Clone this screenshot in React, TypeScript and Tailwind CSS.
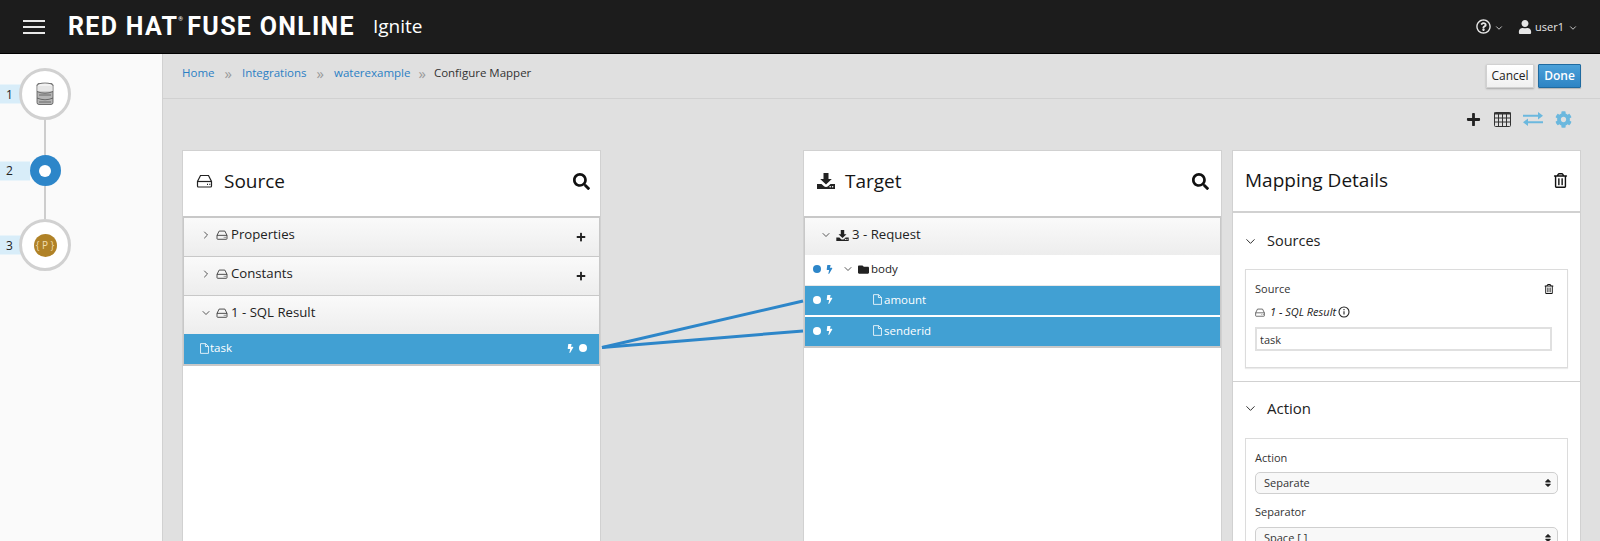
import React from "react";
import { ChevronDown, ChevronRight } from "lucide-react";
import { FaPlus, FaSearch, FaBolt, FaFolder, FaRegTrashAlt, FaUser, FaCog, FaSort, FaRegQuestionCircle } from "react-icons/fa";

function Hdd({ className = "", color = "#222" }: { className?: string; color?: string }) {
  return (
    <svg viewBox="0 0 16 14" className={className} fill="none" stroke={color} strokeWidth="1.2">
      <path d="M4 1.500h8l3 6v4.500a1 1 0 0 1-1 1H2a1 1 0 0 1-1-1V7.500z" />
      <path d="M1 7.500h14" />
      <path d="M10.500 10.300h1M12.800 10.300h1" />
    </svg>
  );
}

function Download({ className = "" }: { className?: string }) {
  return (
    <svg viewBox="0 0 18 16" className={className} fill="#222">
      <path d="M6.500 0h5v6h3.300L9 11.500 3.200 6h3.300z" />
      <path d="M0 11h4.500L7 13.300c1 .9 3 .9 4 0L13.500 11H18v5H0z" />
      <circle cx="13.200" cy="13.700" r=".8" fill="#fff" />
      <circle cx="15.600" cy="13.700" r=".8" fill="#fff" />
    </svg>
  );
}

function FileIcon({ className = "" }: { className?: string }) {
  return (
    <svg viewBox="0 0 10 12" className={className} fill="none" stroke="#fff" strokeWidth=".9">
      <path d="M.6.600h5.600l3.200 3v7.800H.6z" />
      <path d="M6 .600v3.200h3.400" />
    </svg>
  );
}

function InfoCircle() {
  return (
    <svg viewBox="0 0 12 12" className="ml-[2px] h-[12px] w-[12px]" fill="none" stroke="#222" strokeWidth="1.100">
      <circle cx="6" cy="6" r="5" />
      <path d="M6 5.300v3.200M6 3v1.200" />
    </svg>
  );
}

function Db() {
  return (
    <svg viewBox="0 0 18 24" className="h-[24px] w-[18px]">
      <rect x="1" y="1.500" width="16" height="21" rx="2" fill="#b5b5b5" stroke="#555" strokeWidth=".8" />
      <ellipse cx="9" cy="3.500" rx="7.800" ry="2.500" fill="#f2f2f2" stroke="#666" strokeWidth=".8" />
      <rect x="1.400" y="4" width="15.200" height="5.500" fill="#e6e6e6" />
      <path d="M1 9.500q8 3.500 16 0M1 16q8 3.500 16 0M3 13h12M3 20h12" fill="none" stroke="#555" strokeWidth=".8" />
    </svg>
  );
}

function TableIcon() {
  return (
    <svg viewBox="0 0 17 15" className="h-[15px] w-[17px]" fill="none" stroke="#333" strokeWidth="1">
      <rect x=".5" y=".5" width="16" height="14" rx="1" />
      <path d="M0 1.500h17" strokeWidth="2" />
      <path d="M.5 6h16M.5 10h16M4.500 1v13M8.500 1v13M12.500 1v13" />
    </svg>
  );
}

function Arrows() {
  return (
    <svg viewBox="0 0 20 14" className="h-[14px] w-[20px]" fill="#6bb8de">
      <path d="M0 2.700h15V0l5 3.700-5 3.700V4.700H0z" />
      <path d="M20 9.300H5V6.600L0 10.300 5 14v-2.700h15z" />
    </svg>
  );
}

function StepLabel({ n }: { n: number }) {
  return (
    <div className="absolute left-0 top-1/2 flex h-[19px] w-[30px] -translate-y-1/2 items-center bg-[#d8edf9] pl-[6px] text-[12px] text-[#222]">
      {n}
    </div>
  );
}

function Connector({ h }: { h: string }) {
  return (
    <div className="w-[90px]">
      <div className={`mx-auto w-[2px] bg-[#cdcdcd] ${h}`} />
    </div>
  );
}

function Sidebar() {
  return (
    <aside className="w-[163px] shrink-0 border-r border-[#d1d1d1] bg-[#fafafa] pt-[14px]">
      <div className="relative w-[90px]">
        <StepLabel n={1} />
        <div className="relative mx-auto flex h-[52px] w-[52px] items-center justify-center rounded-full border-[3px] border-[#d1d1d1] bg-white">
          <Db />
        </div>
      </div>
      <Connector h="h-[35px]" />
      <div className="relative w-[90px]">
        <StepLabel n={2} />
        <div className="relative mx-auto flex h-[31px] w-[31px] items-center justify-center rounded-full bg-[#2d86c9]">
          <div className="h-[12px] w-[12px] rounded-full bg-white" />
        </div>
      </div>
      <Connector h="h-[33px]" />
      <div className="relative w-[90px]">
        <StepLabel n={3} />
        <div className="relative mx-auto flex h-[52px] w-[52px] items-center justify-center rounded-full border-[3px] border-[#d1d1d1] bg-white">
          <div className="flex h-[23px] w-[23px] items-center justify-center rounded-full bg-[#b08227] text-[10px] whitespace-nowrap text-[#f0dcae]">
            {"{ P }"}
          </div>
        </div>
      </div>
    </aside>
  );
}

function Crumb({ children }: { children: React.ReactNode }) {
  return <span className="text-[#2b7fc4]">{children}</span>;
}

function Sep({ className }: { className: string }) {
  return <span className={`text-[15px] leading-none text-[#9a9a9a] ${className}`}>»</span>;
}

function SourceHead({ open, label, plus }: { open?: boolean; label: string; plus?: boolean }) {
  return (
    <div
      className={`flex items-center bg-gradient-to-b from-[#fafafa] to-[#ededed] pb-[5px] pl-[16px] pr-[13px] text-[13.2px] text-[#222] ${
        open ? "h-[38px]" : "h-[39px] border-b border-[#c8c8c8]"
      }`}
    >
      {open ? <ChevronDown size={12} strokeWidth={1.5} /> : <ChevronRight size={12} strokeWidth={1.5} />}
      <Hdd className="ml-[4px] mr-[3px] h-[10px] w-[12px]" color="#333" />
      <span className="flex-1">{label}</span>
      {plus && <FaPlus size={10} className="mt-[4px] text-[#222]" />}
    </div>
  );
}

function PanelTitle({ icon, title, action }: { icon?: React.ReactNode; title: string; action: React.ReactNode }) {
  return (
    <div className="flex items-center px-[12px] text-[19px] text-[#151515]">
      {icon}
      <span className="flex-1">{title}</span>
      {action}
    </div>
  );
}

function TargetRow({ name }: { name: string }) {
  return (
    <div className="flex h-[29px] items-center bg-[#41a0d3] pb-[2px] pl-[8px] text-[11.5px] font-medium text-white">
      <div className="h-[8px] w-[8px] rounded-full bg-white" />
      <FaBolt size={9} className="ml-[4px]" />
      <FileIcon className="ml-[39px] mr-[2px] h-[11px] w-[9px]" />
      {name}
    </div>
  );
}

function SectionHead({ title, className }: { title: string; className: string }) {
  return (
    <>
      <ChevronDown size={15} strokeWidth={1.5} className="ml-[-2px]" />
      <span className={`ml-[9px] ${className}`}>{title}</span>
    </>
  );
}

export default function App() {
  return (
    <div className="flex h-[541px] w-[1600px] flex-col overflow-hidden bg-[#e0e0e0] font-['Open_Sans',sans-serif]">
      <header className="flex h-[54px] shrink-0 items-center border-b border-black bg-[#1c1c1c] pl-[23px] pr-[22px] text-white">
        <div className="flex w-[22px] flex-col gap-[4px]">
          <div className="h-[2px] bg-[#e8e8e8]" />
          <div className="h-[2px] bg-[#e8e8e8]" />
          <div className="h-[2px] bg-[#e8e8e8]" />
        </div>
        <div className="ml-[23px] flex items-start font-['Roboto',sans-serif] text-[25px] font-bold leading-none tracking-[1.3px]">
          RED HAT<span className="text-[6px] leading-[10px]">®</span>
          <span className="ml-[3px]">FUSE ONLINE</span>
        </div>
        <span className="ml-[18px] text-[19px]">Ignite</span>
        <div className="ml-auto mt-[2px] flex items-center text-[11px] text-[#e6e6e6]">
          <FaRegQuestionCircle size={15} className="mt-[-2px]" />
          <ChevronDown size={10} strokeWidth={2} className="ml-[3px]" />
          <FaUser size={14} className="ml-[14px] mt-[-2px]" />
          <span className="ml-[3px]">user1</span>
          <ChevronDown size={10} strokeWidth={2} className="ml-[4px]" />
        </div>
      </header>

      <div className="flex min-h-0 flex-1">
        <Sidebar />
        <main className="relative flex min-w-0 flex-1 flex-col">
          <div className="flex h-[45px] shrink-0 items-start border-b border-[#d1d1d1] pl-[19px] pr-[19px] pt-[10px]">
            <div className="flex items-center text-[11.5px] leading-[18px] text-[#333]">
              <Crumb>Home</Crumb>
              <Sep className="mx-[10px]" />
              <Crumb>Integrations</Crumb>
              <Sep className="mx-[10px]" />
              <Crumb>waterexample</Crumb>
              <Sep className="mx-[8px]" />
              <span>Configure Mapper</span>
            </div>
            <div className="ml-auto flex gap-[4px] text-[12px]">
              <button className="h-[24px] w-[48px] rounded-[1px] border border-[#d1d1d1] bg-gradient-to-b from-white to-[#f0f0f0] text-[#222] shadow-[0_1px_2px_rgba(0,0,0,0.25)]">
                Cancel
              </button>
              <button className="h-[24px] w-[43px] rounded-[1px] border border-[#1f6aa0] bg-gradient-to-b from-[#4aa0d9] to-[#2d84c4] font-semibold text-white shadow-[0_1px_1px_rgba(0,0,0,0.2)]">
                Done
              </button>
            </div>
          </div>

          <div className="flex h-[51px] shrink-0 items-center justify-end pb-[11px] pr-[28px]">
            <FaPlus size={15} className="text-[#222]" />
            <div className="ml-[13px]">
              <TableIcon />
            </div>
            <div className="ml-[12px]">
              <Arrows />
            </div>
            <FaCog size={17} className="ml-[12px] text-[#6bb8de]" />
          </div>

          <div className="flex min-h-0 flex-1 items-stretch pl-[19px]">
            <section className="w-[419px] border border-b-0 border-[#d1d1d1] bg-white">
              <div className="h-[65px] pt-[16px]">
                <PanelTitle
                  icon={<Hdd className="ml-[1px] mr-[11px] h-[14px] w-[17px]" />}
                  title="Source"
                  action={<FaSearch size={17} className="mr-[-2px] text-[#111]" />}
                />
              </div>
              <div className="border-x border-t-2 border-b-[2px] border-[#c8c8c8]">
                <SourceHead label="Properties" plus />
                <SourceHead label="Constants" plus />
                <SourceHead label="1 - SQL Result" open />
                <div className="flex h-[30px] items-center bg-[#41a0d3] pb-[2px] pl-[16px] pr-[12px] text-[11.5px] font-medium text-white">
                  <FileIcon className="mr-[1px] h-[11px] w-[9px]" />
                  <span className="flex-1">task</span>
                  <FaBolt size={9} />
                  <div className="ml-[4px] h-[8px] w-[8px] rounded-full bg-white" />
                </div>
              </div>
            </section>

            <section className="ml-[202px] w-[419px] border border-b-0 border-[#d1d1d1] bg-white">
              <div className="h-[65px] pt-[16px]">
                <PanelTitle
                  icon={<Download className="ml-[1px] mr-[10px] h-[16px] w-[18px]" />}
                  title="Target"
                  action={<FaSearch size={17} className="text-[#111]" />}
                />
              </div>
              <div className="border-x border-t-2 border-b-[2px] border-[#c8c8c8]">
                <div className="flex h-[37px] items-center bg-gradient-to-b from-[#fafafa] to-[#ededed] pl-[15px] pb-[3px] text-[13.2px] text-[#222]">
                  <ChevronDown size={12} strokeWidth={1.5} />
                  <Download className="ml-[4px] mr-[3px] h-[11px] w-[13px]" />
                  3 - Request
                </div>
                <div className="flex h-[31px] items-center border-b border-[#e8e8e8] pb-[2px] pl-[8px] text-[11.5px] text-[#222]">
                  <div className="h-[8px] w-[8px] rounded-full bg-[#2d86c9]" />
                  <FaBolt size={9} className="ml-[4px] text-[#2d86c9]" />
                  <ChevronDown size={12} strokeWidth={1.5} className="ml-[8px]" />
                  <FaFolder size={11} className="ml-[4px] mr-[2px]" />
                  body
                </div>
                <TargetRow name="amount" />
                <div className="h-[2px] bg-white" />
                <TargetRow name="senderid" />
              </div>
            </section>

            <section className="ml-[10px] w-[349px] border border-b-0 border-[#d1d1d1] bg-white">
              <div className="h-[62px] border-b-2 border-[#d1d1d1] pt-[15px]">
                <PanelTitle title="Mapping Details" action={<FaRegTrashAlt size={15} className="text-[#111]" />} />
              </div>
              <div className="border-b border-[#d1d1d1] px-[12px] pb-[13px]">
                <div className="flex h-[56px] items-center text-[14.5px] text-[#222]">
                  <SectionHead title="Sources" className="" />
                </div>
                <div className="h-[99px] border border-[#dcdcdc] px-[9px] pt-[10px] shadow-[0_1px_1px_rgba(0,0,0,0.08)]">
                  <div className="flex items-center justify-between text-[11px] leading-[18px] text-[#333]">
                    Source
                    <FaRegTrashAlt size={10} className="mr-[4px] text-[#111]" />
                  </div>
                  <div className="mt-[6px] flex items-center text-[11px] italic leading-[16px] text-[#222]">
                    <Hdd className="mr-[5px] h-[9px] w-[10px]" color="#444" />
                    1 - SQL Result
                    <InfoCircle />
                  </div>
                  <input
                    readOnly
                    value="task"
                    className="mt-[7px] h-[24px] w-[297px] border-2 border-[#e0e0e0] px-[3px] text-[11px] text-[#333] outline-none"
                  />
                </div>
              </div>
              <div className="px-[12px]">
                <div className="flex h-[56px] items-center pb-[4px] text-[14px] text-[#222]">
                  <SectionHead title="Action" className="text-[15px]" />
                </div>
                <div className="border border-[#dcdcdc] px-[9px] pt-[10px]">
                  <div className="text-[11px] leading-[18px] text-[#333]">Action</div>
                  <div className="mt-[5px] flex h-[22px] w-[303px] items-center rounded-[5px] border border-[#cfcfcf] bg-[#f8f8f8] pl-[8px] pr-[4px] text-[11px] text-[#333]">
                    <span className="flex-1">Separate</span>
                    <FaSort size={10} className="text-[#222]" />
                  </div>
                  <div className="mt-[9px] text-[11px] leading-[18px] text-[#333]">Separator</div>
                  <div className="mt-[6px] flex h-[22px] w-[303px] items-center rounded-[5px] border border-[#cfcfcf] bg-[#f8f8f8] pl-[8px] pr-[4px] text-[11px] text-[#333]">
                    <span className="flex-1">Space [ ]</span>
                    <FaSort size={10} className="text-[#222]" />
                  </div>
                </div>
              </div>
            </section>

            <svg className="pointer-events-none absolute left-0 top-0 h-full w-full" fill="none" stroke="#2d86c9" strokeWidth="3">
              <path d="M439 293.500L640 247" />
              <path d="M439 293.500L640 277" />
            </svg>
          </div>
        </main>
      </div>
    </div>
  );
}
